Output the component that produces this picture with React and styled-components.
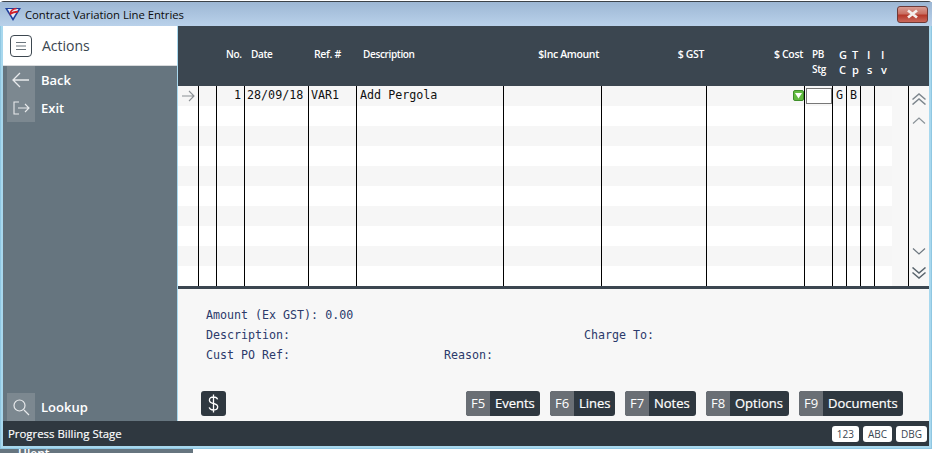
import React from "react";
import styled, { createGlobalStyle } from "styled-components";

const Global = createGlobalStyle`
  html, body { margin: 0; padding: 0; background: #fff; }
  #root { width: 937px; height: 453px; overflow: hidden; }
`;

const Page = styled.div`
  width: 937px; height: 453px; background: #fff; overflow: hidden;
  display: flex; flex-direction: column; align-items: flex-start;
`;
const Window = styled.div`
  width: 932px; height: 448px; margin-top: 1px; box-sizing: border-box; flex: none;
  border: 1px solid #8fc7e2; border-top-color: #3c4248; border-radius: 4px 4px 0 0;
  padding-bottom: 2px;
  background: #a8d8ee; display: flex; flex-direction: column;
`;
const TitleBar = styled.div`
  height: 24px; flex: none; display: flex; align-items: center;
  padding: 0 4px 0 5px; gap: 4px; margin: 0 -1px;
  background: linear-gradient(#9db7d4, #b9d1ea);
  font: 11.35px "Open Sans", sans-serif; color: #0c0c0c;
`;
const TitleText = styled.span` flex: 1; letter-spacing: -0.05px; `;
const CloseBtn = styled.div`
  width: 31px; height: 17px; box-sizing: border-box; border: 1px solid #6d3a38; border-radius: 3px;
  background: linear-gradient(#d89c92 0%, #c96f62 45%, #b5382a 55%, #c9695c 100%);
  display: flex; align-items: center; justify-content: center;
`;
const Body = styled.div`
  flex: 1; min-height: 0; display: flex; margin: 0 1px 0 2px; width: 926px;
`;
const Sidebar = styled.div`
  width: 174px; flex: none; display: flex; flex-direction: column; background: #66757f;
  font: 600 13px "Open Sans", sans-serif; color: #fff;
`;
const ActionHead = styled.div`
  height: 39px; flex: none; display: flex; align-items: center; gap: 10px; padding-left: 7px;
  background: #fff; border-bottom: 1px solid #d8dadc;
  font: 14px "Open Sans", sans-serif; color: #3a4650;
`;
const MenuBox = styled.div`
  width: 20px; height: 20px; border: 1px solid #3d4750; border-radius: 4px;
  display: flex; align-items: center; justify-content: center;
`;
const SideSpacer = styled.div` flex: 1; `;
const SideItem = styled.div`
  height: 28px; display: flex; align-items: center; gap: 6px; padding-left: 4px;
`;
const SideIcon = styled.div`
  width: 28px; height: 28px; background: #7c8890; display: flex; align-items: center; justify-content: center;
`;
const Main = styled.div`
  flex: 1; min-width: 0; display: flex; flex-direction: column; background: #f7f7f7; margin-left: 1px;
`;
const HeaderRow = styled.div`
  height: 60px; flex: none; background: #3b4650; display: grid; grid-template-columns: ${p => p.$cols};
  font: 600 10px "Open Sans", sans-serif; color: #fff; letter-spacing: -0.35px;
`;
const Head = styled.div`
  padding-top: 21px; line-height: 15px; white-space: pre-line;
  text-align: ${p => p.$align || "left"};
  padding-left: ${p => p.$pl || 0}px; padding-right: ${p => p.$pr || 0}px;
  font-size: ${p => p.$size || 10}px;
`;
const GridArea = styled.div`
  height: 200px; flex: none; display: flex; background: #f7f7f7;
`;
const Rows = styled.div` width: 714px; flex: none; display: flex; flex-direction: column; `;
const Row = styled.div`
  height: 20px; display: grid; grid-template-columns: ${p => p.$cols};
  background: ${p => (p.$even ? "#f6f6f6" : "#ffffff")};
  font: 11.7px "DejaVu Sans Mono", monospace; color: #111;
`;
const Cell = styled.div`
  box-sizing: border-box; border-right: ${p => (p.$noline ? "0" : "1px solid #000")};
  line-height: 19px; white-space: pre; position: relative;
  text-align: ${p => p.$align || "left"};
  padding-left: ${p => p.$pl || 0}px; padding-right: ${p => p.$pr || 0}px;
  display: ${p => (p.$flex ? "flex" : "block")}; align-items: center; justify-content: ${p => p.$flex || "flex-start"};
`;
const Gap = styled.div` width: 17px; box-sizing: border-box; flex: none; border-right: 1px solid #000; `;
const Scroller = styled.div`
  flex: 1; display: flex; flex-direction: column; justify-content: space-between; align-items: center;
  padding: 7px 0;
`;
const ScrollGroup = styled.div` display: flex; flex-direction: column; gap: 12px; align-items: center; `;
const Divider = styled.div` height: 3px; flex: none; background: #3b4650; `;
const Detail = styled.div`
  flex: 1; min-height: 0; display: flex; flex-direction: column; padding: 18px 0 0 28px;
  font: 11.65px "DejaVu Sans Mono", monospace; color: #2b3a6b;
`;
const DetailLine = styled.div`
  height: 20px; line-height: 16px; display: grid; grid-template-columns: ${p => p.$cols || "1fr"};
  white-space: pre;
`;
const Actions = styled.div`
  display: flex; align-items: center; margin-top: auto; margin-bottom: 5px; padding-right: 26px; margin-left: -5px;
`;
const DollarBtn = styled.div`
  width: 25px; height: 25px; border-radius: 3px; background: #2f3840; margin-right: auto;
  display: flex; align-items: center; justify-content: center;
`;
const FKey = styled.div`
  height: 25px; width: ${p => p.$w}px; display: flex; border-radius: 3px; overflow: hidden; margin-left: 10px;
  font: 400 13px "Open Sans", sans-serif; color: #fff; background: #2f3840; line-height: 25px;
`;
const KeyCap = styled.span` width: 24px; flex: none; text-align: center; background: #6a6f75; `;
const KeyLabel = styled.span` padding-left: 5px; -webkit-text-stroke: 0.2px #fff; white-space: nowrap; `;
const Status = styled.div`
  height: 25px; width: 926px; box-sizing: border-box; flex: none; background: #2f3840; margin: 0 1px 0 2px; display: flex; align-items: center;
  justify-content: space-between; padding: 0 2px 0 5px;
  font: 11.4px "Open Sans", sans-serif; color: #fff; -webkit-text-stroke: 0.15px #fff;
`;
const Badges = styled.div` display: flex; gap: 4px; `;
const Badge = styled.div`
  height: 16px; padding: 0 5px; min-width: 15px; text-align: center; border-radius: 3px; background: #fff; color: #3b4650;
  font: 10px/16px "Open Sans", sans-serif; -webkit-text-stroke: 0;
`;
const Below = styled.div`
  width: 193px; height: 4px; flex: none; background: #66757f; overflow: hidden;
  font: 600 12px/10px "Open Sans", sans-serif; color: #fff; padding-left: 18px; box-sizing: border-box;
`;
const Input = styled.div`
  width: 26px; height: 16px; margin: 2px 0 0 1px; box-sizing: border-box; border: 1px solid #777; background: #fff;
`;
const Drop = styled.svg`
  position: absolute; right: 0; top: 4px;
`;

const cols = "21px 18px 28px 64px 48px 147px 98px 105px 98px 28px 14px 14px 14px 17px";
const headCols = "21px 18px 28px 64px 48px 147px 98px 105px 98px 28px 14px 14px 14px 14px 1fr";

const Arrow = ({ d, stroke = "#e8eaec", w = 1.3, size = 22 }) => (
  <svg width={size} height={size} viewBox="0 0 22 22" fill="none" stroke={stroke} strokeWidth={w}><path d={d} /></svg>
);
const Chev = ({ d, h = 7, c = "#59646d", sw = 1.2 }) => (
  <svg width="14" height={h} viewBox={`0 0 14 ${h}`} fill="none" stroke={c} strokeWidth={sw} style={{ display: "block" }}><path d={d} /></svg>
);

const fkeys = [
  ["F5", "Events", 74],
  ["F6", "Lines", 65],
  ["F7", "Notes", 71],
  ["F8", "Options", 83],
  ["F9", "Documents", 104],
];

export default function App() {
  const rows = Array.from({ length: 10 }, (_, i) => i);
  return (
    <Page>
      <Global />
      <Window>
        <TitleBar>
          <svg width="16" height="14" viewBox="0 0 16 14" style={{ marginTop: -1 }}>
            <path d="M0 1h16L8 14z" fill="#1d3f9e" />
            <path d="M2.5 2h11L8 11z" fill="#e8eef6" />
            <path d="M11.5 1.5C7.5 2 5 4 5.5 7 7.5 5.2 10 4.8 13 4.6" fill="none" stroke="#d3202a" strokeWidth="1.6" />
          </svg>
          <TitleText>Contract Variation Line Entries</TitleText>
          <CloseBtn>
            <svg width="15" height="10" viewBox="0 0 15 10"><path d="M3 1.5l9 7M12 1.5l-9 7" stroke="#f4eeec" strokeWidth="2.8" /></svg>
          </CloseBtn>
        </TitleBar>
        <Body>
          <Sidebar>
            <ActionHead>
              <MenuBox>
                <svg width="12" height="10" viewBox="0 0 12 10" stroke="#6a747c" strokeWidth="1"><path d="M1 1.5h10M1 5h10M1 8.5h10" /></svg>
              </MenuBox>
              Actions
            </ActionHead>
            <SideItem>
              <SideIcon><Arrow d="M19 11H3M10 4l-7 7 7 7" /></SideIcon>
              Back
            </SideItem>
            <SideItem>
              <SideIcon>
                <Arrow d="M9 5H4v12h5M8 11h11M15 7l4 4-4 4" w={1.1} />
              </SideIcon>
              Exit
            </SideItem>
            <SideSpacer />
            <SideItem>
              <SideIcon>
                <Arrow d="M14 14l5 5M15 9.5a5.5 5.5 0 1 1-11 0 5.5 5.5 0 0 1 11 0z" w={1.2} />
              </SideIcon>
              Lookup
            </SideItem>
          </Sidebar>
          <Main>
            <HeaderRow $cols={headCols}>
              <Head />
              <Head />
              <Head $pl={9}>No.</Head>
              <Head $pl={6}>Date</Head>
              <Head $pl={5} $size={10.5}>Ref. #</Head>
              <Head $pl={6}>Description</Head>
              <Head $align="right" $pr={3} $size={10.5}>$Inc Amount</Head>
              <Head $align="right" $pr={3} $size={10.5}>$ GST</Head>
              <Head $align="right" $pr={2} $size={10.5}>$ Cost</Head>
              <Head $pl={7}>{"PB\nStg"}</Head>
              <Head $pl={6} $size={11}>{"G\nC"}</Head>
              <Head $pl={5} $size={11}>{"T\np"}</Head>
              <Head $pl={6} $size={11}>{"I\ns"}</Head>
              <Head $pl={6} $size={11}>{"I\nv"}</Head>
              <Head />
            </HeaderRow>
            <GridArea>
              <Rows>
                {rows.map(i => (
                  <Row key={i} $cols={cols} $even={i % 2 === 0}>
                    <Cell $flex="center">
                      {i === 0 && (
                        <svg width="14" height="12" viewBox="0 0 14 12" fill="none" stroke="#8a8f94" strokeWidth="1.1"><path d="M1 6h12M8 1l5 5-5 5" /></svg>
                      )}
                    </Cell>
                    <Cell />
                    <Cell $align="right" $pr={3}>{i === 0 ? "1" : ""}</Cell>
                    <Cell $pl={2}>{i === 0 ? "28/09/18" : ""}</Cell>
                    <Cell $pl={2}>{i === 0 ? "VAR1" : ""}</Cell>
                    <Cell $pl={3}>{i === 0 ? "Add Pergola" : ""}</Cell>
                    <Cell />
                    <Cell />
                    <Cell>
                      {i === 0 && (
                        <Drop width="11" height="11" viewBox="0 0 11 11">
                          <rect x="0.5" y="0.5" width="10" height="10" rx="1.5" fill="#62bb40" stroke="#3f8f2a" />
                          <path d="M2 3h7L5.5 8.5z" fill="#fff" />
                        </Drop>
                      )}
                    </Cell>
                    <Cell>{i === 0 && <Input />}</Cell>
                    <Cell $pl={3}>{i === 0 ? "G" : ""}</Cell>
                    <Cell $pl={3}>{i === 0 ? "B" : ""}</Cell>
                    <Cell />
                    <Cell $noline />
                  </Row>
                ))}
              </Rows>
              <Gap />
              <Scroller>
                <ScrollGroup>
                  <Chev h={12} c="#7d868d" sw={1.5} d="M0.5 6.5l6.5-5.5 6.5 5.5M0.5 11.5l6.5-5.5 6.5 5.5" />
                  <Chev h={7} c="#8a9298" d="M1 6.5l6-5.5 6 5.5" />
                </ScrollGroup>
                <ScrollGroup>
                  <Chev h={7} c="#6e7880" d="M1 0.5l6 5.5 6-5.5" />
                  <Chev h={12} c="#59646d" sw={1.5} d="M0.5 0.5l6.5 5.5 6.5-5.5M0.5 5.5l6.5 5.5 6.5-5.5" />
                </ScrollGroup>
              </Scroller>
            </GridArea>
            <Divider />
            <Detail>
              <DetailLine>Amount (Ex GST): 0.00</DetailLine>
              <DetailLine $cols="378px 1fr">
                <span>Description:</span><span>Charge To:</span>
              </DetailLine>
              <DetailLine $cols="238px 1fr">
                <span>Cust PO Ref:</span><span>Reason:</span>
              </DetailLine>
              <Actions>
                <DollarBtn>
                  <svg width="11" height="19" viewBox="0 0 11 19" fill="none" stroke="#fff" strokeWidth="1.3"><path d="M9.6 5.4C9.2 3.8 7.8 3 5.5 3 3 3 1.4 4.2 1.4 6.2s1.6 2.7 4.1 3.3 4.2 1.3 4.2 3.3-1.7 3.2-4.2 3.2c-2.4 0-3.9-.9-4.3-2.6M5.5 0.5v18" /></svg>
                </DollarBtn>
                {fkeys.map(([k, label, w]) => (
                  <FKey key={k} $w={w}><KeyCap>{k}</KeyCap><KeyLabel>{label}</KeyLabel></FKey>
                ))}
              </Actions>
            </Detail>
          </Main>
        </Body>
        <Status>
          Progress Billing Stage
          <Badges><Badge>123</Badge><Badge>ABC</Badge><Badge>DBG</Badge></Badges>
        </Status>
      </Window>
      <Below>Ulent</Below>
    </Page>
  );
}
